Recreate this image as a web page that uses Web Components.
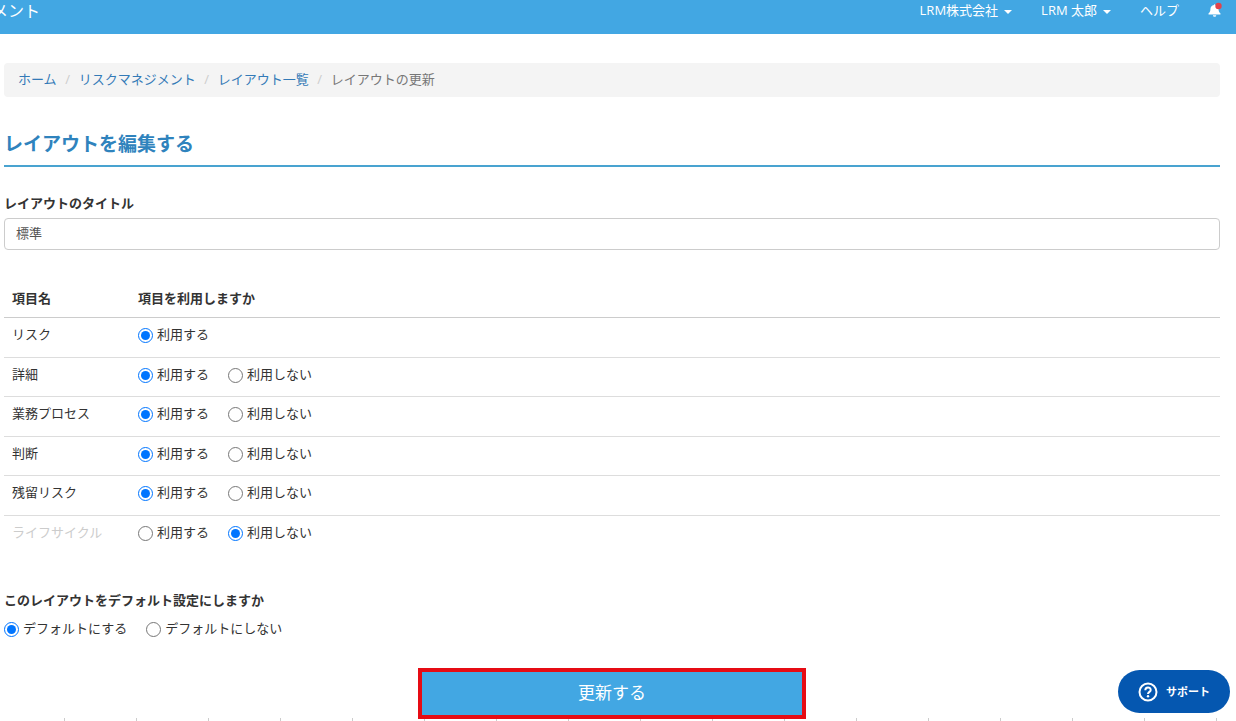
<!DOCTYPE html>
<html lang="ja">
<head>
<meta charset="UTF-8">
<meta name="viewport" content="width=device-width, initial-scale=1">
<title>レイアウトの更新</title>
<style>
  body {
    margin: 0;
    background: #fff;
    color: #333;
    font-family: "Open Sans", "Noto Sans CJK JP", sans-serif;
    font-size: 13px;
    line-height: 20px;
  }

  /* 下端に薄い目盛りが並ぶ */
  main {
    display: flex;
    flex-direction: column;
    padding: 29px 16px 2px 4px;
    background: linear-gradient(90deg, transparent 64px, #ccc 64px, #ccc 65px, transparent 65px) left bottom / 72px 3px repeat-x;
  }
</style>
</head>
<body>
  <app-header brand="メント">
    <nav-item caret>LRM株式会社</nav-item>
    <nav-item caret>LRM 太郎</nav-item>
    <nav-item>ヘルプ</nav-item>
    <bell-button></bell-button>
  </app-header>

  <main>
    <crumb-trail>
      <crumb-item href="#home">ホーム</crumb-item>
      <crumb-item href="#risk">リスクマネジメント</crumb-item>
      <crumb-item href="#layouts">レイアウト一覧</crumb-item>
      <crumb-item>レイアウトの更新</crumb-item>
    </crumb-trail>
    <page-title>レイアウトを編集する</page-title>
    <text-field label="レイアウトのタイトル" value="標準"></text-field>
    <item-table></item-table>
    <default-setting></default-setting>
    <submit-button>更新する</submit-button>
  </main>

  <support-button>サポート</support-button>

<script>
  // ヘッダー
  class AppHeader extends HTMLElement {
    connectedCallback() {
      this.attachShadow({ mode: 'open' }).innerHTML = `
        <style>
          :host { display: block; }
          header {
            display: flex;
            justify-content: space-between;
            height: 34px;
            padding: 0 14px 0 0;
            box-sizing: border-box;
            background: #42a7e3;
            color: #fff;
            overflow: hidden;
          }
          /* ブランド名は左端にはみ出す */
          .brand { margin-left: -8px; font-size: 16px; line-height: 22px; }
          nav { display: flex; gap: 29px; line-height: 20px; }
        </style>
        <header>
          <div class="brand">${this.getAttribute('brand')}</div>
          <nav><slot></slot></nav>
        </header>
      `;
    }
  }

  class NavItem extends HTMLElement {
    connectedCallback() {
      this.attachShadow({ mode: 'open' }).innerHTML = `
        <style>
          :host { display: block; }
          a { display: flex; align-items: center; gap: 6px; color: inherit; text-decoration: none; }
          .caret { margin-top: 4px; border: 4px solid transparent; border-top-color: #fff; border-bottom: 0; }
        </style>
        <a href="#"><slot></slot>${this.hasAttribute('caret') ? '<span class="caret"></span>' : ''}</a>
      `;
    }
  }

  class BellButton extends HTMLElement {
    connectedCallback() {
      this.attachShadow({ mode: 'open' }).innerHTML = `
        <style>
          :host { display: block; }
          button { display: block; padding: 2px 0; border: 0; background: none; cursor: pointer; }
          svg { display: block; }
        </style>
        <button type="button" aria-label="お知らせ">
          <svg width="14" height="16" viewBox="0 0 14 16">
            <path fill="#fff" d="M6 2.500a1 1 0 0 1 1.300 0v.6C9.500 3.500 10.600 5.200 10.600 7.300c0 2 .5 3 1.700 3.900.5.5.3 1.400-.5 1.400H1.200c-.8 0-1-.9-.5-1.400 1.200-.9 1.700-1.900 1.700-3.900C2.400 5.200 3.600 3.500 6 3.100zM4.900 13.300h3.400a1.700 1.500 0 0 1-3.400 0z"/>
            <circle cx="10.500" cy="4" r="3.200" fill="#e2434b"/>
          </svg>
        </button>
      `;
    }
  }

  // パンくずリスト
  class CrumbTrail extends HTMLElement {
    connectedCallback() {
      this.attachShadow({ mode: 'open' }).innerHTML = `
        <style>
          :host { display: block; }
          nav { display: flex; padding: 6px 14px 8px; background: #f4f4f4; border-radius: 4px; }
        </style>
        <nav aria-label="パンくず"><slot></slot></nav>
      `;
    }
  }

  class CrumbItem extends HTMLElement {
    connectedCallback() {
      const href = this.getAttribute('href');
      this.attachShadow({ mode: 'open' }).innerHTML = `
        <style>
          :host { display: flex; color: #777; }
          :host(:not(:first-child))::before {
            content: "/";
            width: 22px;
            text-align: center;
            color: #ccc;
          }
          a { color: #337ab7; text-decoration: none; }
        </style>
        ${href ? `<a href="${href}"><slot></slot></a>` : '<slot></slot>'}
      `;
    }
  }

  class PageTitle extends HTMLElement {
    connectedCallback() {
      this.attachShadow({ mode: 'open' }).innerHTML = `
        <style>
          :host { display: block; margin-top: 34px; }
          h1 {
            margin: 0;
            padding-bottom: 8px;
            border-bottom: 2px solid #49a3d0;
            color: #2f83bd;
            font-size: 19px;
            line-height: 26px;
          }
        </style>
        <h1><slot></slot></h1>
      `;
    }
  }

  class TextField extends HTMLElement {
    connectedCallback() {
      this.attachShadow({ mode: 'open' }).innerHTML = `
        <style>
          :host { display: flex; flex-direction: column; gap: 5px; margin-top: 26px; }
          label { font-weight: bold; }
          input {
            height: 32px;
            padding: 0 11px 4px;
            box-sizing: border-box;
            border: 1px solid #ccc;
            border-radius: 4px;
            color: #555;
            font: inherit;
          }
        </style>
        <label for="field">${this.getAttribute('label')}</label>
        <input id="field" type="text" value="${this.getAttribute('value') || ''}">
      `;
    }
  }

  // ラジオボタンの組。options はカンマ区切り、selected は選択中の番号
  class RadioGroup extends HTMLElement {
    connectedCallback() {
      const options = this.getAttribute('options').split(',');
      const selected = Number(this.getAttribute('selected') || 0);
      this.attachShadow({ mode: 'open' }).innerHTML = `
        <style>
          :host { display: flex; gap: 19px; }
          label { display: flex; align-items: center; gap: 4px; }
          input { width: 15px; height: 15px; margin: 2px 0 0; accent-color: #0075ff; }
        </style>
        ${options.map((text, i) => `
          <label><input type="radio" name="choice"${i === selected ? ' checked' : ''}>${text}</label>
        `).join('')}
      `;
    }
  }

  // 項目の一覧表
  class ItemTable extends HTMLElement {
    connectedCallback() {
      const both = '利用する,利用しない';
      const rows = [
        { name: 'リスク', options: '利用する', selected: 0 },
        { name: '詳細', options: both, selected: 0 },
        { name: '業務プロセス', options: both, selected: 0 },
        { name: '判断', options: both, selected: 0 },
        { name: '残留リスク', options: both, selected: 0 },
        { name: 'ライフサイクル', options: both, selected: 1 },
      ];
      this.attachShadow({ mode: 'open' }).innerHTML = `
        <style>
          :host { display: block; margin-top: 31px; }
          table { width: 100%; border-collapse: separate; border-spacing: 0; }
          th, td { padding: 6px 8px; text-align: left; vertical-align: top; box-sizing: border-box; }
          th { height: 37px; padding-top: 7px; border-bottom: 1px solid #ccc; }
          th:first-child { width: 126px; }
          td { height: 40px; border-bottom: 1px solid #ddd; }
          tr:nth-child(even) td { height: 39px; }
          tr:last-child td { border-bottom: 0; }
          .off { color: #ccc; }
        </style>
        <table>
          <thead>
            <tr><th scope="col">項目名</th><th scope="col">項目を利用しますか</th></tr>
          </thead>
          <tbody>
            ${rows.map(row => `
              <tr>
                <td${row.selected ? ' class="off"' : ''}>${row.name}</td>
                <td><radio-group options="${row.options}" selected="${row.selected}"></radio-group></td>
              </tr>
            `).join('')}
          </tbody>
        </table>
      `;
    }
  }

  class DefaultSetting extends HTMLElement {
    connectedCallback() {
      this.attachShadow({ mode: 'open' }).innerHTML = `
        <style>
          :host { display: block; margin-top: 35px; }
          fieldset { margin: 0; padding: 0; border: 0; }
          legend { padding: 0 0 8px; font-weight: bold; }
        </style>
        <fieldset>
          <legend>このレイアウトをデフォルト設定にしますか</legend>
          <radio-group options="デフォルトにする,デフォルトにしない"></radio-group>
        </fieldset>
      `;
    }
  }

  class SubmitButton extends HTMLElement {
    connectedCallback() {
      this.attachShadow({ mode: 'open' }).innerHTML = `
        <style>
          :host { display: flex; justify-content: center; margin-top: 30px; }
          button {
            width: 388px;
            max-width: 100%;
            height: 51px;
            padding: 0 0 2px;
            border: 4px solid #e60c14;
            background: #42a7e3;
            color: #fff;
            font: inherit;
            font-size: 17px;
            cursor: pointer;
          }
        </style>
        <button type="submit"><slot></slot></button>
      `;
    }
  }

  // 右下に浮かぶサポートボタン
  class SupportButton extends HTMLElement {
    connectedCallback() {
      this.attachShadow({ mode: 'open' }).innerHTML = `
        <style>
          :host { display: block; position: fixed; right: 6px; bottom: 8px; }
          button {
            display: flex;
            align-items: center;
            gap: 8px;
            height: 43px;
            padding: 0 20px;
            border: 0;
            border-radius: 22px;
            background: #0557b0;
            color: #fff;
            font: inherit;
            font-size: 11px;
            font-weight: bold;
            cursor: pointer;
          }
        </style>
        <button type="button">
          <svg width="20" height="20" viewBox="0 0 20 20" fill="none" stroke="#fff" stroke-width="2">
            <circle cx="10" cy="10" r="8.500"/>
            <path d="M7.300 8.200C7.300 4.500 12.700 4.500 12.700 7.900C12.700 9.800 10 9.900 10 12"/>
            <circle cx="10" cy="14.300" r="1.200" fill="#fff" stroke="none"/>
          </svg>
          <slot></slot>
        </button>
      `;
    }
  }

  customElements.define('app-header', AppHeader);
  customElements.define('nav-item', NavItem);
  customElements.define('bell-button', BellButton);
  customElements.define('crumb-trail', CrumbTrail);
  customElements.define('crumb-item', CrumbItem);
  customElements.define('page-title', PageTitle);
  customElements.define('text-field', TextField);
  customElements.define('radio-group', RadioGroup);
  customElements.define('item-table', ItemTable);
  customElements.define('default-setting', DefaultSetting);
  customElements.define('submit-button', SubmitButton);
  customElements.define('support-button', SupportButton);
</script>
</body>
</html>
